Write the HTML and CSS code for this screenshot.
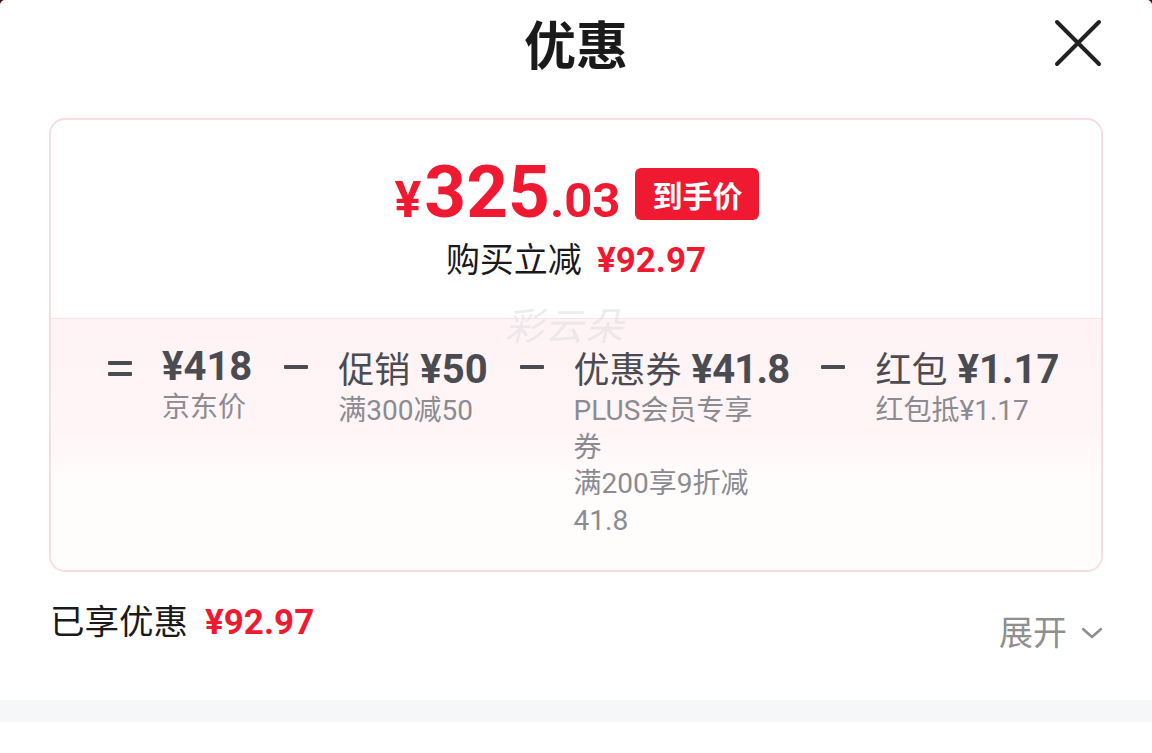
FILE: index.html
```html
<!DOCTYPE html>
<html lang="zh-CN">
<head>
  <meta charset="UTF-8">
  <meta name="viewport" content="width=device-width, initial-scale=1.0">
  <title>优惠</title>
  <link rel="stylesheet" href="styles.css">
</head>
<body>
  <div class="sheet">
    <header class="sheet-header">
      <h1>优惠</h1>
      <button class="close" type="button" aria-label="关闭">
        <svg width="48" height="48" viewBox="0 0 48 48">
          <path d="M3 3 L45 45 M45 3 L3 45" stroke="#222" stroke-width="4" stroke-linecap="round" fill="none"/>
        </svg>
      </button>
    </header>

    <section class="card">
      <div class="card-top">
        <div class="price-line">
          <span class="price">
            <span class="yen">¥</span><span class="int">325</span><span class="dec">.03</span>
          </span>
          <span class="badge">到手价</span>
        </div>
        <div class="save-line">购买立减<span class="red">¥92.97</span></div>
      </div>

      <div class="card-bottom">
        <span class="watermark">彩云朵</span>
        <div class="formula">
          <span class="op op-eq"></span>
          <div class="item">
            <div class="item-main">¥418</div>
            <div class="item-sub">京东价</div>
          </div>
          <span class="op op-minus"></span>
          <div class="item">
            <div class="item-main"><span class="label">促销</span> ¥50</div>
            <div class="item-sub">满300减50</div>
          </div>
          <span class="op op-minus"></span>
          <div class="item">
            <div class="item-main"><span class="label">优惠券</span> <span class="tight">¥41.8</span></div>
            <div class="item-sub">PLUS会员专享券</div>
            <div class="item-sub">满200享9折减41.8</div>
          </div>
          <span class="op op-minus"></span>
          <div class="item">
            <div class="item-main"><span class="label">红包</span> ¥1.17</div>
            <div class="item-sub">红包抵¥1.17</div>
          </div>
        </div>
      </div>
    </section>

    <div class="summary">
      <div class="enjoyed">已享优惠<span class="red">¥92.97</span></div>
      <div class="expand">展开
        <svg width="22" height="14" viewBox="0 0 22 14">
          <path d="M2 3 L11 11 L20 3" stroke="#8f8f8f" stroke-width="2.5" stroke-linecap="round" stroke-linejoin="round" fill="none"/>
        </svg>
      </div>
    </div>

    <div class="divider"></div>
  </div>
</body>
</html>
```

FILE: styles.css
```css
body {
  margin: 0;
  padding: 0;
  background: #3a0b0b;
  font-family: Roboto, "Noto Sans CJK SC", sans-serif;
  color: #1a1a1a;
}
.sheet {
  height: 753px;
  background: #fff;
  border-radius: 5px 5px 0 0;
  overflow: hidden;
}
.sheet-header {
  position: relative;
  height: 86px;
  display: flex;
  align-items: center;
  justify-content: center;
}
.sheet-header h1 {
  margin: 0;
  font-family: "Noto Sans CJK SC", sans-serif;
  font-size: 52px;
  font-weight: 700;
  line-height: 1;
  color: #1a1a1a;
}
.close {
  position: absolute;
  right: 50px;
  top: 19px;
  width: 48px;
  height: 48px;
  padding: 0;
  border: none;
  background: none;
}
.card {
  margin: 32px 49px 0;
  border: 2px solid #f9dbe2;
  border-radius: 16px;
  overflow: hidden;
}
.card-top {
  height: 198px;
  display: flex;
  flex-direction: column;
  align-items: center;
  box-sizing: border-box;
  padding-top: 36px;
}
.price-line {
  display: flex;
  align-items: center;
  gap: 15px;
  margin-left: 2px;
}
.price {
  color: #ef1a32;
  font-weight: 700;
  line-height: 1;
  display: flex;
  align-items: baseline;
}
.price .yen {
  font-size: 50px;
  margin-right: 3px;
}
.price .int {
  font-size: 73px;
}
.price .dec {
  font-size: 49px;
}
.badge {
  background: #ef1a32;
  color: #fff;
  font-family: "Noto Sans CJK SC", sans-serif;
  font-weight: 700;
  font-size: 30px;
  line-height: 52px;
  height: 52px;
  padding: 0 17px;
  border-radius: 6px;
  margin-top: 2px;
}
.save-line {
  margin-top: 6px;
  font-family: "Noto Sans CJK SC", sans-serif;
  font-size: 34px;
  line-height: 46px;
  color: #1a1a1a;
}
.red {
  color: #ef1a32;
  font-family: Roboto, sans-serif;
  font-weight: 700;
  font-size: 35px;
  margin-left: 15px;
}
.card-bottom {
  position: relative;
  border-top: 1px solid #fbe2e7;
  background: linear-gradient(#fff3f5 0%, #fff5f6 45%, #fffcfc 62%, #fffcfc 100%);
  height: 252px;
  box-sizing: border-box;
  padding: 25px 0 0 57px;
}
.watermark {
  position: absolute;
  left: 454px;
  top: -14px;
  font-family: "Noto Sans CJK SC", sans-serif;
  font-size: 38px;
  line-height: 1;
  font-style: italic;
  color: rgba(228, 228, 230, 0.7);
  letter-spacing: 2px;
}
.formula {
  display: flex;
  align-items: flex-start;
  gap: 30px;
  position: relative;
}
.op {
  position: relative;
  flex: none;
  width: 24px;
  height: 46px;
}
.op::before,
.op::after {
  content: "";
  position: absolute;
  left: 0;
  width: 24px;
  height: 4px;
  border-radius: 1px;
  background: #4b4b52;
}
.op-eq::before {
  top: 17px;
}
.op-eq::after {
  top: 28px;
}
.op-minus::before {
  top: 21px;
}
.op-minus::after {
  display: none;
}
.item {
  display: flex;
  flex-direction: column;
  margin-right: 2px;
}
.item-main {
  font-size: 40px;
  font-weight: 700;
  line-height: 46px;
  color: #4b4b52;
  white-space: nowrap;
}
.item-main .label {
  font-family: "Noto Sans CJK SC", sans-serif;
  font-weight: 400;
  font-size: 36px;
}
.item-main .tight {
  letter-spacing: -0.8px;
}
.item-sub {
  max-width: 196px;
  font-size: 28px;
  line-height: 36.5px;
  color: #8b8b92;
  font-family: Roboto, "Noto Sans CJK SC", sans-serif;
}
.summary {
  display: flex;
  justify-content: space-between;
  align-items: flex-start;
  padding: 0 49px 0 50px;
  margin-top: 24px;
}
.enjoyed {
  font-family: "Noto Sans CJK SC", sans-serif;
  font-size: 34.5px;
  line-height: 46px;
  color: #1a1a1a;
}
.enjoyed .red {
  font-size: 35px;
  margin-left: 17px;
}
.expand {
  margin-top: 12px;
  display: flex;
  align-items: center;
  gap: 14px;
  font-family: "Noto Sans CJK SC", sans-serif;
  font-size: 34px;
  line-height: 46px;
  color: #8f8f8f;
}
.expand svg {
  margin-top: 4px;
}
.divider {
  margin-top: 46px;
  height: 22px;
  background: #f6f7f9;
}
```
